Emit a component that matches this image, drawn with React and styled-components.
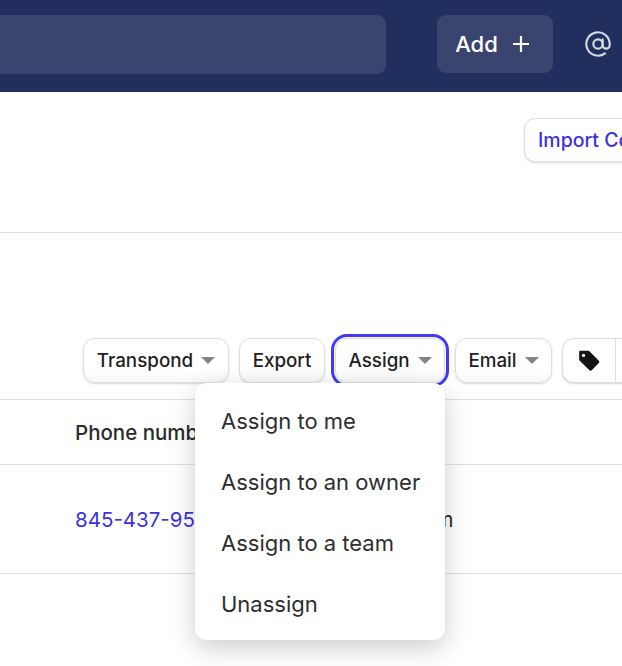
import React from "react";
import styled, { createGlobalStyle } from "styled-components";

const Global = createGlobalStyle`
  html, body {
    margin: 0;
    padding: 0;
    height: 100%;
    overflow: hidden;
    background: #fff;
    font-family: Inter, "Liberation Sans", sans-serif;
    color: #1f1f1f;
  }
`;

const Page = styled.div`
  width: 622px;
  height: 666px;
  overflow: hidden;
`;

const TopBar = styled.header`
  height: 92px;
  background: #212f5f;
  display: flex;
  align-items: flex-start;
  padding-top: 15px;
  box-sizing: border-box;
`;

const Search = styled.div`
  width: 386px;
  height: 59px;
  flex: none;
  background: #39456f;
  border-radius: 0 9px 9px 0;
`;

const AddButton = styled.button`
  width: 116px;
  height: 58px;
  flex: none;
  margin-left: 51px;
  border: 0;
  border-radius: 9px;
  background: #39456f;
  color: #fff;
  font: 500 22px Inter, sans-serif;
  display: flex;
  align-items: center;
  justify-content: center;
  gap: 15px;
  padding: 0 6px 0 0;
`;

const AtIcon = styled.span`
  display: flex;
  flex: none;
  margin: 15px 0 0 31px;
  color: #d7dae3;
`;

const ImportRow = styled.div`
  height: 141px;
  box-sizing: border-box;
  border-bottom: 1px solid #e0e0e0;
  padding: 26px 0 0 524px;
  display: flex;
  white-space: nowrap;
`;

const ImportButton = styled.button`
  flex: none;
  width: 180px;
  height: 44px;
  box-sizing: border-box;
  border: 1px solid #dedede;
  border-radius: 11px;
  background: #fff;
  box-shadow: 0 1px 2px rgba(0, 0, 0, 0.14);
  color: #3d32e0;
  font: 500 19.5px Inter, sans-serif;
  text-align: left;
  padding: 0 0 0 13px;
`;

const Toolbar = styled.div`
  height: 167px;
  box-sizing: border-box;
  border-bottom: 1px solid #e0e0e0;
  padding: 105px 0 0 83px;
  display: flex;
  gap: 10px;
  align-items: flex-start;
`;

const ToolWrap = styled.div`
  position: relative;
  flex: none;
`;

const ToolButton = styled.button`
  flex: none;
  height: 45px;
  width: ${(p) => p.$w}px;
  box-sizing: border-box;
  border: 1px solid #dedede;
  border-radius: 12px;
  background: linear-gradient(#fff 65%, #f9f9f9);
  box-shadow: 0 1px 2px rgba(0, 0, 0, 0.16);
  color: #1f1f1f;
  font: 500 18.8px Inter, sans-serif;
  display: flex;
  align-items: center;
  justify-content: center;
  gap: 8px;
  padding: 0;
  outline: ${(p) => (p.$focus ? "3px solid #4338f5" : "none")};
  outline-offset: 1px;
`;

const Caret = styled.span`
  width: 0;
  height: 0;
  border-left: 7px solid transparent;
  border-right: 7px solid transparent;
  border-top: 7px solid #858585;
`;

const TagGroup = styled.div`
  flex: none;
  display: flex;
  width: 120px;
  height: 45px;
  box-sizing: border-box;
  border: 1px solid #dedede;
  border-radius: 12px;
  background: #fff;
  box-shadow: 0 1px 2px rgba(0, 0, 0, 0.16);
`;

const TagCell = styled.div`
  width: 52px;
  border-right: 1px solid #dedede;
  display: flex;
  align-items: center;
  justify-content: center;
  color: #141414;
`;

const Menu = styled.ul`
  position: absolute;
  top: 45px;
  left: -140px;
  z-index: 5;
  width: 250px;
  height: 257px;
  box-sizing: border-box;
  margin: 0;
  padding: 7px 0;
  list-style: none;
  background: #fff;
  border-radius: 12px;
  box-shadow: 0 8px 26px rgba(0, 0, 0, 0.2);
`;

const MenuItem = styled.li`
  height: 61px;
  display: flex;
  align-items: center;
  padding-left: 26px;
  color: #2e2e2e;
  font: 400 22px Inter, sans-serif;
  white-space: nowrap;
`;

const Row = styled.div`
  display: grid;
  grid-template-columns: 340px 1fr;
  height: ${(p) => p.$h}px;
  box-sizing: border-box;
  border-bottom: 1px solid #e0e0e0;
  padding: ${(p) => p.$top}px 0 0 75px;
  align-items: center;
  font-size: 20.5px;
  white-space: nowrap;
`;

const HeadCell = styled.div`
  font-weight: 500;
  color: #2b2b2b;
`;

const PhoneLink = styled.a`
  color: #3d32e0;
`;

const EmailCell = styled.div`
  color: #2b2b2b;
  margin-left: -161px;
`;

function App() {
  return (
    <Page>
      <Global />
      <TopBar>
        <Search />
        <AddButton>
          Add
          <svg width="16" height="16" viewBox="0 0 16 16" fill="none" stroke="#fff" strokeWidth="2.2">
            <path d="M8 0v16M0 8h16" />
          </svg>
        </AddButton>
        <AtIcon>
          <svg width="28" height="28" viewBox="0 0 24 24" fill="none" stroke="currentColor" strokeWidth="1.8" strokeLinecap="round">
            <circle cx="12" cy="12" r="4" />
            <path d="M16 8v5a3 3 0 0 0 6 0v-1a10 10 0 1 0-4 8" />
          </svg>
        </AtIcon>
      </TopBar>
      <ImportRow>
        <ImportButton>Import Contacts</ImportButton>
      </ImportRow>
      <Toolbar>
        <ToolButton $w={146}>Transpond <Caret /></ToolButton>
        <ToolButton $w={86}>Export</ToolButton>
        <ToolWrap>
          <ToolButton $w={110} $focus>Assign <Caret /></ToolButton>
          <Menu>
            <MenuItem>Assign to me</MenuItem>
            <MenuItem>Assign to an owner</MenuItem>
            <MenuItem>Assign to a team</MenuItem>
            <MenuItem>Unassign</MenuItem>
          </Menu>
        </ToolWrap>
        <ToolButton $w={97}>Email <Caret /></ToolButton>
        <TagGroup>
          <TagCell>
            <svg width="24" height="24" viewBox="0 0 22 22" fill="currentColor">
              <path fillRule="evenodd" d="M2 2.5C2 2 2.4 1.6 3 1.6h7.2c.5 0 .9.2 1.2.5l8.6 8.7c.6.6.6 1.500 0 2.100l-6.500 6.500c-.6.6-1.500.6-2.100 0L2.500 10.800c-.3-.3-.5-.7-.5-1.200V2.500zM6 4.400a1.500 1.500 0 1 0 0 3 1.500 1.500 0 0 0 0-3z" />
            </svg>
          </TagCell>
        </TagGroup>
      </Toolbar>
      <Row $h={65} $top={0}>
        <HeadCell>Phone number</HeadCell>
        <HeadCell />
      </Row>
      <Row $h={109} $top={1}>
        <PhoneLink>845-437-9500</PhoneLink>
        <EmailCell>sales@example.com</EmailCell>
      </Row>
    </Page>
  );
}

export default App;
